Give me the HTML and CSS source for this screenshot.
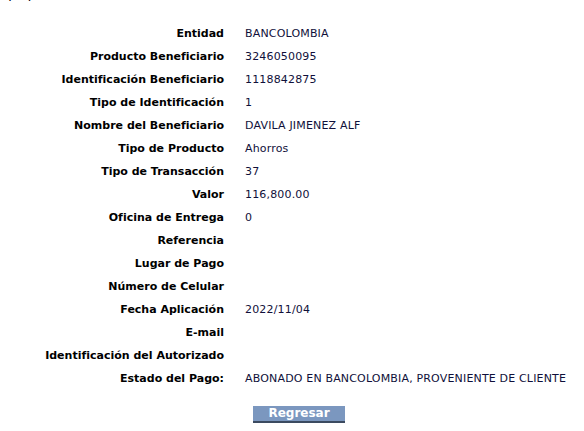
FILE: index.html
```html
<!DOCTYPE html>
<html lang="es">
<head>
  <meta charset="UTF-8">
  <title>Detalle del Pago</title>
  <link rel="stylesheet" href="styles.css">
</head>
<body>
  <div class="fecha-top">04/11/2022</div>

  <div class="detalle">
    <div class="label">Entidad</div><div class="value">BANCOLOMBIA</div>
    <div class="label">Producto Beneficiario</div><div class="value">3246050095</div>
    <div class="label">Identificación Beneficiario</div><div class="value">1118842875</div>
    <div class="label">Tipo de Identificación</div><div class="value">1</div>
    <div class="label">Nombre del Beneficiario</div><div class="value">DAVILA JIMENEZ ALF</div>
    <div class="label">Tipo de Producto</div><div class="value">Ahorros</div>
    <div class="label">Tipo de Transacción</div><div class="value">37</div>
    <div class="label">Valor</div><div class="value">116,800.00</div>
    <div class="label">Oficina de Entrega</div><div class="value">0</div>
    <div class="label">Referencia</div><div class="value"></div>
    <div class="label">Lugar de Pago</div><div class="value"></div>
    <div class="label">Número de Celular</div><div class="value"></div>
    <div class="label">Fecha Aplicación</div><div class="value">2022/11/04</div>
    <div class="label">E-mail</div><div class="value"></div>
    <div class="label">Identificación del Autorizado</div><div class="value"></div>
    <div class="label">Estado del Pago:</div><div class="value">ABONADO EN BANCOLOMBIA, PROVENIENTE DE CLIENTE</div>
  </div>

  <div class="acciones">
    <button type="button" class="btn-regresar">Regresar</button>
  </div>
</body>
</html>
```

FILE: styles.css
```css
body {
  margin: 0;
  padding: 0;
  font-family: Tahoma, "DejaVu Sans", Verdana, sans-serif;
  font-size: 11px;
  color: #000;
  background: #fff;
}

/* fecha del encabezado, queda casi fuera de la vista */
.fecha-top {
  margin-top: -9px;
  margin-left: -6px;
  height: 12px;
  line-height: 12px;
  font-weight: bold;
  overflow: hidden;
}

.detalle {
  display: grid;
  grid-template-columns: 216px auto;
  grid-auto-rows: 23px;
  column-gap: 21px;
  margin-top: 19px;
  padding-left: 8px;
}

.label,
.value {
  line-height: 23px;
  white-space: nowrap;
}

.label {
  text-align: right;
  font-weight: bold;
}

.value {
  color: #10103a;
  letter-spacing: 0.17px;
}

.acciones {
  margin-top: 16px;
  padding-left: 253px;
}

.btn-regresar {
  width: 92px;
  height: 17px;
  padding: 0;
  border: none;
  border-bottom: 2px solid #3b4a60;
  background: #7b97bf;
  color: #fff;
  font-family: Tahoma, "DejaVu Sans", Verdana, sans-serif;
  font-size: 12px;
  font-weight: bold;
  line-height: 15px;
  cursor: pointer;
}
```
